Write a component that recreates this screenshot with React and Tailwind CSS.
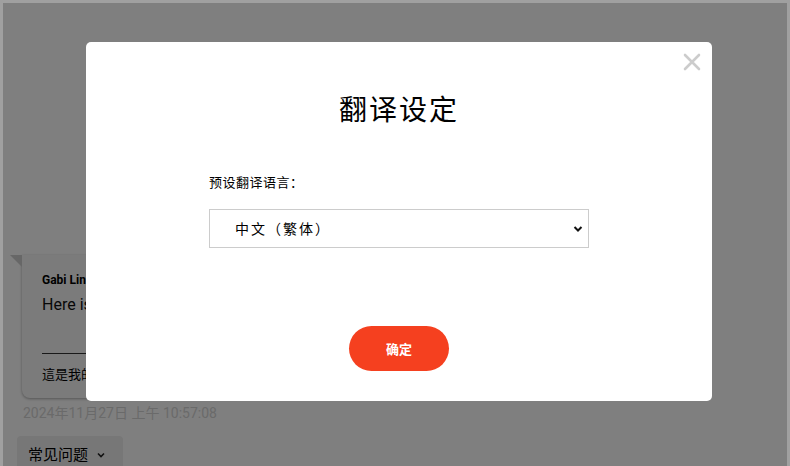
import React from "react";

export default function App() {
  const cjk = { fontFamily: '"Noto Sans CJK SC", "Noto Sans", sans-serif' };
  return (
    <div className="w-[790px] h-[466px] overflow-hidden bg-[#a0a0a0] pt-[3px] px-[3px]">
      <div className="relative w-full h-full bg-white overflow-hidden" style={{ fontFamily: 'Roboto, "Noto Sans CJK SC", sans-serif' }}>
        {/* underlying page */}
        <div className="pt-[252px] pl-[7px] flex flex-col items-start">
          <div className="relative ml-[12px] w-[220px] h-[143px] bg-[#f7f7f7] rounded-b-[8px] shadow-[0_1px_3px_rgba(0,0,0,0.35)] pl-[20px] pt-[17px]">
            <div className="absolute -left-[12px] top-0 w-0 h-0 border-t-[12px] border-t-[#cfcfcf] border-l-[12px] border-l-transparent" />
            <div className="text-[12px] font-bold text-black leading-[16px]">Gabi Lin</div>
            <div className="text-[16px] text-[#111] leading-[22px] mt-[6px]">Here is the</div>
            <div className="mt-[37px] w-[180px] h-px bg-[#333]" />
            <div className="text-[13px] text-black mt-[10px]" style={cjk}>這是我的翻譯</div>
          </div>
          <div className="ml-[13px] mt-[5px] text-[14px] text-[#d4d4d4]" style={{ fontFamily: 'Roboto, "Noto Sans CJK SC", sans-serif' }}>2024年11月27日 上午 10:57:08</div>
          <div className="mt-[12px] ml-[7px] w-[106px] h-[36px] bg-[#eeeeee] rounded-[4px] flex items-start pt-[7px] pl-[11px] gap-[8px] text-[15px] text-black" style={cjk}>
            常见问题
            <svg width="10" height="10" viewBox="0 0 10 10" className="mt-[7px]"><path d="M2 3.5 L5 6.5 L8 3.5" stroke="#222" strokeWidth="1.6" fill="none" /></svg>
          </div>
        </div>

        {/* overlay */}
        <div className="absolute inset-0 bg-black/50" />

        {/* modal */}
        <div className="absolute left-[83px] top-[39px] w-[626px] h-[359px] bg-white rounded-[5px] flex flex-col items-center" style={cjk}>
          <button className="absolute right-[10px] top-[10px] w-[20px] h-[20px] flex items-center justify-center">
            <svg width="18" height="18" viewBox="0 0 18 18"><path d="M2 2 L16 16 M16 2 L2 16" stroke="#cccccc" strokeWidth="2.6" strokeLinecap="round" /></svg>
          </button>
          <h1 className="mt-[46px] text-[28px] leading-[40px] font-normal text-black tracking-[2px]">翻译设定</h1>
          <div className="mt-[44px] w-[380px] flex flex-col">
            <label className="text-[13px] text-black leading-[20px] tracking-[0.5px]">预设翻译语言：</label>
            <div className="relative mt-[17px] w-[380px] h-[39px] border border-[#cccccc] flex items-center pl-[25px] text-[14px] tracking-[2px] text-black">
              中文（繁体）
              <svg className="absolute right-[5px] top-[15px]" width="10" height="8" viewBox="0 0 10 8"><path d="M1.5 2 L5 5.5 L8.5 2" stroke="#111" strokeWidth="2" fill="none" /></svg>
            </div>
          </div>
          <button className="mt-[78px] w-[100px] h-[45px] rounded-full bg-[#f5401f] text-white text-[13px] font-bold">确定</button>
        </div>
      </div>
    </div>
  );
}
